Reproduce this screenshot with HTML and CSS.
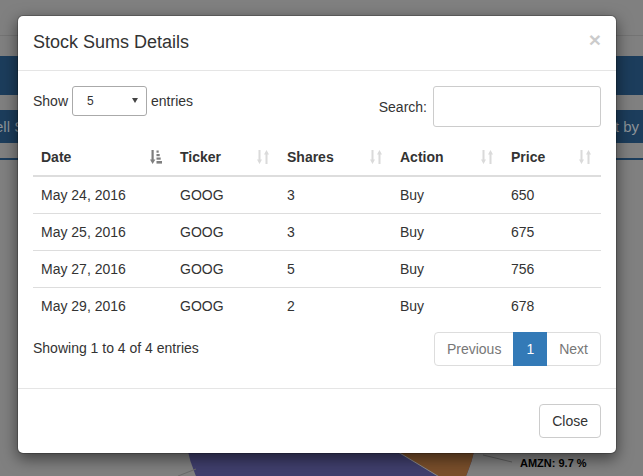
FILE: index.html
```html
<!DOCTYPE html>
<html>
<head>
<meta charset="utf-8">
<title>Stock Sums Details</title>
<link rel="stylesheet" href="styles.css">
</head>
<body>
<div class="page">
  <div class="topbar"></div>
  <div class="bar bar-main"></div>
  <div class="bar bar-tools"><span class="tool-left">ell S</span><span class="tool-right">t by</span></div>
  <div class="rule"></div>
  <svg class="chart" width="643" height="316" viewBox="0 0 643 316">
    <defs>
      <clipPath id="pieClip"><circle cx="331" cy="258" r="147"/></clipPath>
    </defs>
    <g clip-path="url(#pieClip)">
      <rect x="150" y="100" width="400" height="230" fill="#403f6d"/>
      <polygon points="312,240 700,240 700,330 461,330" fill="#7a4f2b"/>
      <line x1="312" y1="240" x2="461" y2="330" stroke="#8a8a8a" stroke-width="1"/>
    </g>
    <line x1="483" y1="295" x2="512" y2="302" stroke="#5e5e5e" stroke-width="1"/>
    <line x1="178" y1="316" x2="196" y2="309" stroke="#6a6a6a" stroke-width="1"/>
    <text class="chart-label" x="520" y="307">AMZN: 9.7 %</text>
  </svg>
</div>

<div class="modal">
  <div class="modal-header">
    <button class="close" type="button">×</button>
    <h4 class="modal-title">Stock Sums Details</h4>
  </div>
  <div class="modal-body">
    <div class="dt-top">
      <div class="dt-length">Show <span class="select"><span>5</span><span class="caret"></span></span> entries</div>
      <div class="dt-search">Search: <span class="input"></span></div>
    </div>
    <table class="dt-table">
      <colgroup>
        <col class="c-date"><col class="c-ticker"><col class="c-shares"><col class="c-action"><col class="c-price">
      </colgroup>
      <thead>
        <tr>
          <th><div class="th-inner"><span>Date</span>
            <svg class="sort-icon sort-asc" viewBox="0 0 12 14"><path d="M1.5 0h2.2v9.5H5.4L2.6 14 0 9.5h1.5z"/><rect x="6.5" y="0.5" width="2.2" height="2.2"/><rect x="6.5" y="4" width="3.2" height="2.2"/><rect x="6.5" y="7.5" width="4.2" height="2.2"/><rect x="6.5" y="11" width="5.5" height="2.6"/></svg></div></th>
          <th><div class="th-inner"><span>Ticker</span>
            <svg class="sort-icon sort-both" viewBox="0 0 12 14"><path d="M1.5 0h2v9.5H5L2.5 14 0 9.5h1.5z"/><path d="M8.5 14h2V4.5H12L9.5 0 7 4.5h1.5z"/></svg></div></th>
          <th><div class="th-inner"><span>Shares</span>
            <svg class="sort-icon sort-both" viewBox="0 0 12 14"><path d="M1.5 0h2v9.5H5L2.5 14 0 9.5h1.5z"/><path d="M8.5 14h2V4.5H12L9.5 0 7 4.5h1.5z"/></svg></div></th>
          <th><div class="th-inner"><span>Action</span>
            <svg class="sort-icon sort-both" viewBox="0 0 12 14"><path d="M1.5 0h2v9.5H5L2.5 14 0 9.5h1.5z"/><path d="M8.5 14h2V4.5H12L9.5 0 7 4.5h1.5z"/></svg></div></th>
          <th><div class="th-inner"><span>Price</span>
            <svg class="sort-icon sort-both" viewBox="0 0 12 14"><path d="M1.5 0h2v9.5H5L2.5 14 0 9.5h1.5z"/><path d="M8.5 14h2V4.5H12L9.5 0 7 4.5h1.5z"/></svg></div></th>
        </tr>
      </thead>
      <tbody>
        <tr><td>May 24, 2016</td><td>GOOG</td><td>3</td><td>Buy</td><td>650</td></tr>
        <tr><td>May 25, 2016</td><td>GOOG</td><td>3</td><td>Buy</td><td>675</td></tr>
        <tr><td>May 27, 2016</td><td>GOOG</td><td>5</td><td>Buy</td><td>756</td></tr>
        <tr><td>May 29, 2016</td><td>GOOG</td><td>2</td><td>Buy</td><td>678</td></tr>
      </tbody>
    </table>
    <div class="dt-bottom">
      <div class="dt-info">Showing 1 to 4 of 4 entries</div>
      <ul class="pagination">
        <li class="page-item disabled">Previous</li>
        <li class="page-item active">1</li>
        <li class="page-item disabled">Next</li>
      </ul>
    </div>
  </div>
  <div class="modal-footer">
    <button class="btn" type="button">Close</button>
  </div>
</div>
</body>
</html>
```

FILE: styles.css
```css
* { box-sizing: border-box; }

html, body {
  margin: 0;
  padding: 0;
}

body {
  width: 643px;
  height: 476px;
  overflow: hidden;
  position: relative;
  background: #808080;
  font-family: "Liberation Sans", Arial, sans-serif;
  font-size: 14px;
  color: #333;
}

/* background page (under the backdrop) */
.page {
  display: flex;
  flex-direction: column;
  height: 476px;
}

.topbar {
  flex: none;
  height: 36px;
  border-bottom: 1px solid #747474;
}

.bar {
  flex: none;
  background: #1c3d5c;
}

.bar-main {
  margin-top: 20px;
  height: 39px;
}

.bar-tools {
  margin-top: 15px;
  height: 33px;
  display: flex;
  justify-content: space-between;
  align-items: center;
  color: #8d9399;
  font-size: 15px;
  white-space: nowrap;
}

.tool-left { margin-left: -5px; }
.tool-right { margin-right: 4px; }

.rule {
  flex: none;
  margin-top: 15px;
  height: 2px;
  background: #1c3d5c;
}

.chart {
  display: block;
  flex: none;
}

.chart-label {
  font-family: "Liberation Sans", Arial, sans-serif;
  font-size: 11px;
  font-weight: bold;
  fill: #000;
}

/* modal */
.modal {
  position: absolute;
  top: 15px;
  left: 17px;
  width: 600px;
  background: #fff;
  background-clip: padding-box;
  border: 1px solid rgba(0, 0, 0, 0.2);
  border-radius: 6px;
  box-shadow: 0 5px 15px rgba(0, 0, 0, 0.5);
}

.modal-header {
  padding: 14px 15px 16px;
  border-bottom: 1px solid #e5e5e5;
}

.modal-title {
  margin: 0;
  font-size: 18px;
  line-height: 24px;
  font-weight: normal;
  color: #333;
}

.close {
  float: right;
  margin-top: -1px;
  padding: 0;
  border: 0;
  background: transparent;
  font-family: "Liberation Sans", Arial, sans-serif;
  font-size: 21px;
  font-weight: bold;
  line-height: 1;
  color: #000;
  opacity: 0.2;
}

.modal-body {
  padding: 15px 15px 20px;
}

.dt-top {
  display: flex;
  justify-content: space-between;
  align-items: flex-start;
  height: 41px;
}

.dt-length {
  display: flex;
  align-items: center;
  gap: 4px;
  height: 29px;
}

.select {
  display: flex;
  align-items: center;
  justify-content: space-between;
  width: 75px;
  height: 30px;
  padding: 0 8px 0 14px;
  border: 1px solid #aaa;
  border-radius: 3px;
  font-size: 12px;
  color: #333;
}

.caret {
  width: 0;
  height: 0;
  border-left: 3px solid transparent;
  border-right: 3px solid transparent;
  border-top: 5px solid #444;
}

.dt-search {
  display: flex;
  align-items: center;
  gap: 6px;
}

.input {
  display: block;
  width: 168px;
  height: 41px;
  border: 1px solid #ccc;
  border-radius: 3px;
}

.dt-table {
  margin-top: 12px;
  width: 100%;
  border-collapse: collapse;
  table-layout: fixed;
}

.c-date { width: 139px; }
.c-ticker { width: 107px; }
.c-shares { width: 113px; }
.c-action { width: 111px; }
.c-price { width: 98px; }

.dt-table th {
  padding: 8px 10px 8px 8px;
  text-align: left;
  font-weight: bold;
  line-height: 20px;
  border-bottom: 2px solid #ddd;
}

.th-inner {
  display: flex;
  justify-content: space-between;
  align-items: center;
}

.sort-icon {
  flex: none;
  width: 12px;
  height: 14px;
}

.sort-asc { fill: #7f7f7f; }
.sort-both { fill: #dadada; }

.dt-table td {
  padding: 8px;
  line-height: 20px;
  border-top: 1px solid #ddd;
}

.dt-bottom {
  margin-top: 6px;
  display: flex;
  justify-content: space-between;
  align-items: flex-start;
}

.dt-info {
  padding-top: 8px;
  line-height: 20px;
}

.pagination {
  display: flex;
  margin: 2px 0;
  padding: 0;
  list-style: none;
}

.page-item {
  padding: 6px 12px;
  line-height: 20px;
  border: 1px solid #ddd;
  margin-left: -1px;
  color: #777;
  background: #fff;
}

.page-item:first-child {
  margin-left: 0;
  border-radius: 4px 0 0 4px;
}

.page-item:last-child {
  border-radius: 0 4px 4px 0;
}

.page-item.active {
  position: relative;
  background: #337ab7;
  border-color: #337ab7;
  color: #fff;
}

.modal-footer {
  display: flex;
  justify-content: flex-end;
  padding: 15px;
  border-top: 1px solid #e5e5e5;
}

.btn {
  padding: 6px 12px;
  font-family: "Liberation Sans", Arial, sans-serif;
  font-size: 14px;
  line-height: 20px;
  color: #333;
  background: #fff;
  border: 1px solid #ccc;
  border-radius: 4px;
}
```
